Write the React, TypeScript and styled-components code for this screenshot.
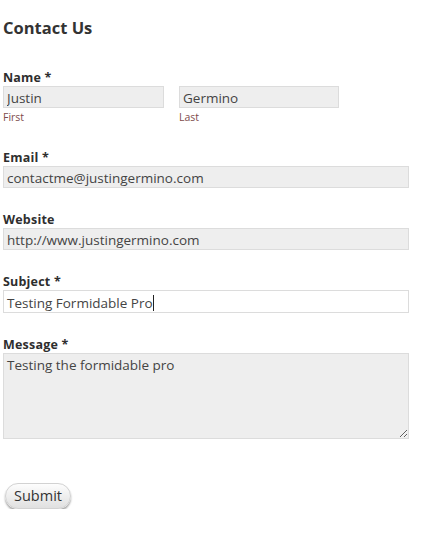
import React from "react";
import styled, { createGlobalStyle } from "styled-components";

const Global = createGlobalStyle`
  html, body { margin: 0; padding: 0; background: #fff; }
  body { font-family: "Open Sans", "DejaVu Sans", sans-serif; color: #333; }
  * { box-sizing: border-box; }
`;

const Page = styled.form`
  width: 430px;
  padding: 16px 21px 0 3px;
`;

const Title = styled.h2`
  margin: 0 0 30px 0;
  font-size: 16.5px;
  line-height: 24px;
  font-weight: 700;
  color: #333;
`;

const Field = styled.div<{ $gap?: number }>`
  display: flex;
  flex-direction: column;
  margin-bottom: ${(p) => p.$gap ?? 24}px;
`;

const Label = styled.label`
  font-size: 12.5px;
  line-height: 16px;
  font-weight: 700;
  color: #2e2e2e;
  height: 16px;
  letter-spacing: 0.2px;
`;

const NameRow = styled.div`
  display: flex;
  gap: 15px;
`;

const NameCol = styled.div<{ $w: number }>`
  display: flex;
  flex-direction: column;
  width: ${(p) => p.$w}px;
`;

const SubLabel = styled.span`
  font-size: 10.5px;
  line-height: 14px;
  color: #7d4b4b;
  margin-top: 2px;
`;

const Input = styled.input`
  width: 100%;
  height: 22px;
  margin: 0;
  padding: 1px 3px 0;
  border: 1px solid #dcdcdc;
  background: #eeeeee;
  font-family: "Open Sans", "DejaVu Sans", sans-serif;
  font-size: 13.5px;
  color: #444;
  outline: none;
`;

const FakeInput = styled.div`
  width: 100%;
  height: 23px;
  padding: 2px 3px 0;
  border: 1px solid #dcdcdc;
  background: #fff;
  font-size: 13.5px;
  line-height: 18px;
  color: #444;
  display: flex;
  align-items: center;
`;

const Caret = styled.span`
  display: inline-block;
  width: 1px;
  height: 16px;
  background: #222;
`;

const TextArea = styled.textarea`
  width: 100%;
  height: 86px;
  margin: 0;
  padding: 2px 3px;
  border: 1px solid #dcdcdc;
  background: #eeeeee;
  font-family: "Open Sans", "DejaVu Sans", sans-serif;
  font-size: 13.5px;
  line-height: 18px;
  color: #444;
  outline: none;
  display: block;
`;

const Submit = styled.button`
  margin: 44px 0 0 2px;
  padding: 2px 8px 3px;
  height: 26px;
  border: 1px solid #d2d2d2;
  border-radius: 13px;
  background: linear-gradient(#fdfdfd, #e0e0e0);
  box-shadow: 0 2px 2px rgba(0, 0, 0, 0.35);
  font-family: "Open Sans", "DejaVu Sans", sans-serif;
  font-size: 14.5px;
  line-height: 18px;
  color: #333;
`;

export default function App() {
  return (
    <>
      <Global />
      <Page onSubmit={(e) => e.preventDefault()}>
        <Title>Contact Us</Title>
        <Field $gap={26}>
          <Label>Name *</Label>
          <NameRow>
            <NameCol $w={161}>
              <Input readOnly defaultValue="Justin" />
              <SubLabel>First</SubLabel>
            </NameCol>
            <NameCol $w={160}>
              <Input readOnly defaultValue="Germino" />
              <SubLabel>Last</SubLabel>
            </NameCol>
          </NameRow>
        </Field>
        <Field>
          <Label>Email *</Label>
          <Input readOnly defaultValue="contactme@justingermino.com" />
        </Field>
        <Field>
          <Label>Website</Label>
          <Input readOnly defaultValue="http://www.justingermino.com" />
        </Field>
        <Field>
          <Label>Subject *</Label>
          <FakeInput>
            Testing Formidable Pro<Caret />
          </FakeInput>
        </Field>
        <Field $gap={0}>
          <Label>Message *</Label>
          <TextArea readOnly defaultValue="Testing the formidable pro" />
        </Field>
        <Submit type="submit">Submit</Submit>
      </Page>
    </>
  );
}
